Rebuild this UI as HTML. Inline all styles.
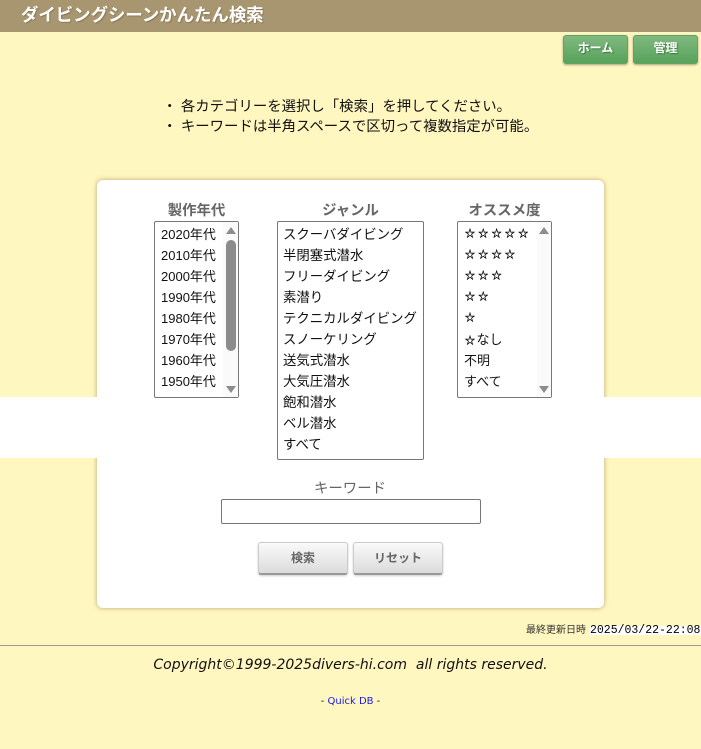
<!DOCTYPE html>
<html lang="ja">
<head>
<meta charset="utf-8">
<title>ダイビングシーンかんたん検索</title>
<style>
html,body{margin:0;padding:0}
body{width:701px;height:749px;position:relative;overflow:hidden;background:#fff6c0;font-family:"Liberation Sans","Noto Sans CJK JP",sans-serif;color:#111}
div,span,a{position:absolute;white-space:nowrap;box-sizing:border-box}
.hdr{left:0;top:0;width:701px;height:32px;background:#a89670}
.ttl{left:21px;top:3px;font-size:17.4px;line-height:24px;font-weight:bold;color:#fff;text-shadow:1px 1px 1px #8a7a58}
.gbtn{top:35px;height:29px;width:65px;border-radius:3px;background:linear-gradient(#80b980,#57a25a);border:1px solid #5fa463;box-shadow:0 1px 2px rgba(0,0,0,.35);color:#fff;font-size:12px;font-weight:bold;text-align:center;line-height:25px;text-shadow:1px 1px 1px #3d7a40}
.ins{left:162.5px;font-size:14.4px;line-height:20px;color:#111}
.band{left:0;top:397px;width:701px;height:61px;background:#fff}
.card{left:97px;top:180px;width:507px;height:428px;background:#fff;border-radius:6px;box-shadow:0 0 5px rgba(120,100,50,.55)}
.lab{font-size:14.4px;line-height:20px;font-weight:bold;color:#666;text-align:center;top:201px}
.box{background:#fff;border:1px solid #777;border-radius:2px;top:221px}
.it{font-size:13px;line-height:21px;color:#111;margin-top:1px}
.g{font-size:13.4px}
.s{font-size:10px;letter-spacing:3.3px;-webkit-text-stroke:.4px #111}
.track{background:#fafafa}
.up{width:0;height:0;border-left:5px solid transparent;border-right:5px solid transparent;border-bottom:7px solid #8c8c8c}
.dn{width:0;height:0;border-left:5px solid transparent;border-right:5px solid transparent;border-top:7px solid #8c8c8c}
.wbtn{top:542px;width:90px;height:33px;border:1px solid #ccc;border-bottom:2px solid #999;border-radius:3px;background:linear-gradient(#fafafa,#dcdcdc);font-size:12px;font-weight:bold;color:#666;text-align:center;line-height:30px;box-shadow:0 1px 2px rgba(0,0,0,.2)}
</style>
</head>
<body>
<div class="hdr"></div>
<div class="ttl">ダイビングシーンかんたん検索</div>
<div class="gbtn" style="left:563px">ホーム</div>
<div class="gbtn" style="left:633px">管理</div>

<div class="ins" style="top:97px">・ 各カテゴリーを選択し「検索」を押してください。</div>
<div class="ins" style="top:117px">・ キーワードは半角スペースで区切って複数指定が可能。</div>

<div class="card"></div>
<div class="band"></div>

<div class="lab" style="left:154px;width:85px">製作年代</div>
<div class="lab" style="left:277px;width:147px">ジャンル</div>
<div class="lab" style="left:457px;width:95px">オススメ度</div>

<div class="box" style="left:154px;width:85px;height:177px">
<div class="track" style="left:68px;top:0;width:15px;height:175px"></div>
<div class="up" style="left:71px;top:5px"></div>
<div style="left:71px;top:18px;width:10px;height:111px;background:#8c8c8c;border-radius:5px"></div>
<div class="dn" style="left:71px;top:164px"></div>
<div class="it" style="left:6px;top:1px">2020年代</div>
<div class="it" style="left:6px;top:22px">2010年代</div>
<div class="it" style="left:6px;top:43px">2000年代</div>
<div class="it" style="left:6px;top:64px">1990年代</div>
<div class="it" style="left:6px;top:85px">1980年代</div>
<div class="it" style="left:6px;top:106px">1970年代</div>
<div class="it" style="left:6px;top:127px">1960年代</div>
<div class="it" style="left:6px;top:148px">1950年代</div>
</div>

<div class="box" style="left:277px;width:147px;height:239px">
<div class="it g" style="left:5px;top:1px">スクーバダイビング</div>
<div class="it g" style="left:5px;top:22px">半閉塞式潜水</div>
<div class="it g" style="left:5px;top:43px">フリーダイビング</div>
<div class="it g" style="left:5px;top:64px">素潜り</div>
<div class="it g" style="left:5px;top:85px">テクニカルダイビング</div>
<div class="it g" style="left:5px;top:106px">スノーケリング</div>
<div class="it g" style="left:5px;top:127px">送気式潜水</div>
<div class="it g" style="left:5px;top:148px">大気圧潜水</div>
<div class="it g" style="left:5px;top:169px">飽和潜水</div>
<div class="it g" style="left:5px;top:190px">ベル潜水</div>
<div class="it g" style="left:5px;top:211px">すべて</div>
</div>

<div class="box" style="left:457px;width:95px;height:177px">
<div class="track" style="left:79px;top:0;width:14px;height:175px"></div>
<div class="up" style="left:81px;top:5px"></div>
<div class="dn" style="left:81px;top:164px"></div>
<div class="it s" style="left:7px;top:1px">☆☆☆☆☆</div>
<div class="it s" style="left:7px;top:22px">☆☆☆☆</div>
<div class="it s" style="left:7px;top:43px">☆☆☆</div>
<div class="it s" style="left:7px;top:64px">☆☆</div>
<div class="it s" style="left:7px;top:85px">☆</div>
<div class="it" style="left:7px;top:106px"><span class="s" style="position:static;letter-spacing:1.5px">☆</span>なし</div>
<div class="it" style="left:6px;top:127px">不明</div>
<div class="it" style="left:6px;top:148px">すべて</div>
</div>

<div style="left:220px;top:479px;width:260px;text-align:center;font-size:14.4px;line-height:20px;color:#666">キーワード</div>
<div style="left:221px;top:499px;width:260px;height:25px;background:#fff;border:1px solid #767676;border-radius:2px"></div>

<div class="wbtn" style="left:258px">検索</div>
<div class="wbtn" style="left:353px">リセット</div>

<div style="left:526px;top:624px;font-size:10px;line-height:13px;color:#333">最終更新日時</div>
<div style="left:590px;top:626px;height:9px;width:111px;background:#fff"></div>
<div style="left:590px;top:624px;font-family:'Liberation Mono',monospace;font-size:11.5px;line-height:13px;color:#000;width:111px">2025/03/22-22:08</div>
<div style="left:0;top:645px;width:701px;height:1px;background:#9a9a9a"></div>
<div style="left:0;top:656px;width:701px;text-align:center;font-family:'DejaVu Sans',sans-serif;font-style:italic;font-size:14px;line-height:18px;color:#111">Copyright©1999-2025divers-hi.com&nbsp; all rights reserved.</div>
<div style="left:0;top:695px;width:701px;text-align:center;font-family:'DejaVu Sans',sans-serif;font-size:10px;line-height:14px;color:#222">- <span style="position:static;color:#1a1ae6">Quick DB</span> -</div>
</body>
</html>
